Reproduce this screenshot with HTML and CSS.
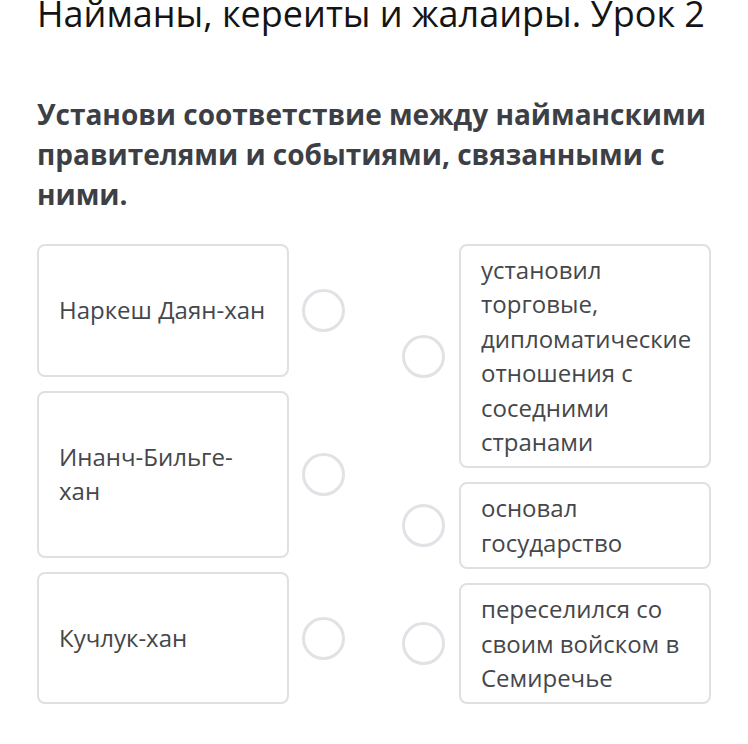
FILE: index.html
```html
<!DOCTYPE html>
<html lang="ru">
<head>
<meta charset="utf-8">
<link rel="stylesheet" href="styles.css">
</head>
<body>
<div class="page">
  <h1 class="title">Найманы, кереиты и жалаиры. Урок 2</h1>
  <p class="question">Установи соответствие между найманскими правителями и событиями, связанными с ними.</p>
  <div class="match">
    <div class="col left">
      <div class="row">
        <div class="card">Наркеш Даян-хан</div>
        <span class="dot"></span>
      </div>
      <div class="row">
        <div class="card">Инанч-Бильге-хан</div>
        <span class="dot"></span>
      </div>
      <div class="row">
        <div class="card">Кучлук-хан</div>
        <span class="dot"></span>
      </div>
    </div>
    <div class="col right">
      <div class="row">
        <span class="dot"></span>
        <div class="card">установил торговые, дипломатические отношения с соседними странами</div>
      </div>
      <div class="row">
        <span class="dot"></span>
        <div class="card">основал государство</div>
      </div>
      <div class="row">
        <span class="dot"></span>
        <div class="card">переселился со своим войском в Семиречье</div>
      </div>
    </div>
  </div>
</div>
</body>
</html>
```
FILE: styles.css
```css
html, body {
  margin: 0;
  padding: 0;
  background: #ffffff;
}
.page {
  padding: 0 37px 0 37px;
  font-family: "Open Sans", "Noto Sans", sans-serif;
}
.title {
  margin: -8px 0 0 0;
  font-size: 36px;
  font-weight: 400;
  line-height: 44px;
  color: #141414;
  white-space: nowrap;
}
.question {
  margin: 58px 0 0 0;
  width: 674px;
  font-size: 28px;
  font-weight: 700;
  line-height: 40px;
  color: #3c3f45;
}
.match {
  display: flex;
  margin-top: 30px;
  width: 674px;
}
.col {
  display: flex;
  flex-direction: column;
  gap: 14px;
}
.left {
  width: 366px;
}
.left .row {
  flex: 1 1 auto;
  align-items: stretch;
}
.row {
  display: flex;
  align-items: center;
}
.left .row .dot {
  align-self: center;
  margin-left: 13px;
}
.card {
  box-sizing: border-box;
  width: 252px;
  border: 2px solid #e0e0e2;
  border-radius: 8px;
  padding: 7px 18px 7px 20px;
  font-size: 24px;
  line-height: 34.4px;
  color: #45474b;
  display: flex;
  align-items: center;
}
.right .card {
  margin-left: 14px;
  padding-right: 8px;
}
.dot {
  flex: none;
  box-sizing: border-box;
  width: 43px;
  height: 43px;
  border: 3px solid #e2e2e6;
  border-radius: 50%;
}
```
